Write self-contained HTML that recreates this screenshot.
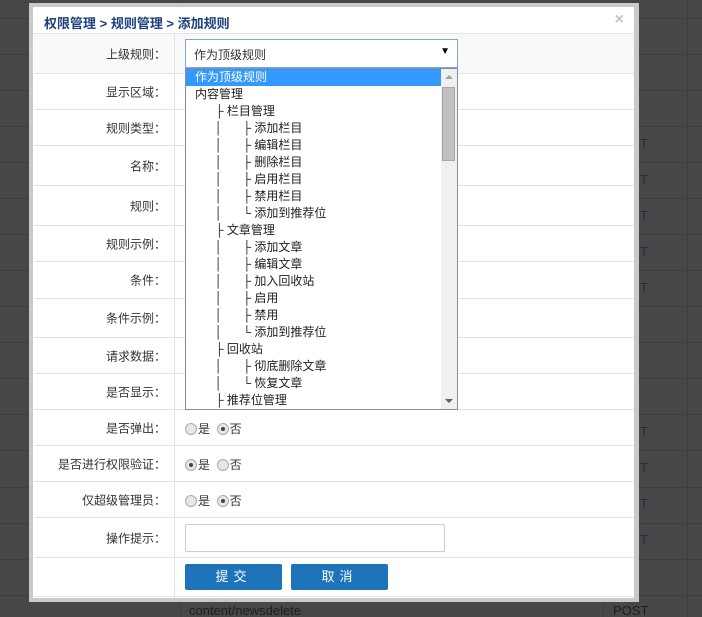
<!DOCTYPE html>
<html style="height:617px;overflow:hidden"><head><meta charset="utf-8"><style>
*{margin:0;padding:0;box-sizing:border-box}
body{width:702px;height:617px;overflow:hidden;background:#474747;font-family:"Liberation Sans","Noto Sans CJK SC",sans-serif;font-size:12px;position:relative;color:#333}
.bgh{position:absolute;left:0;width:702px;height:1px;background:#3d3d3d}
.bgv{position:absolute;top:0;width:1px;height:617px;background:#3d3d3d}
.bt{position:absolute;color:#1e1e1e;font-size:13px}
.dlg{position:absolute;left:29px;top:3px;width:610px;height:599px;background:#c9c9c9}
.in{position:absolute;left:4px;top:4px;width:601px;height:591px;background:#fff}
.title{position:absolute;left:11px;top:6px;font-size:13px;font-weight:bold;color:#1d3f7b}
.x{position:absolute;right:10px;top:4px;color:#c4c4c4;font-size:16px;font-weight:bold}
.row{position:absolute;left:1px;width:600px;border-top:1px solid #e2e2e2}
.lab{position:absolute;left:0;width:132px;text-align:right;top:50%;transform:translateY(-50%);font-size:12px;color:#333}
.vl{position:absolute;left:141px;top:27px;width:1px;height:564px;background:#e2e2e2}
.sel{position:absolute;left:152px;top:32px;width:273px;height:29px;border:1px solid #7ea6d8;background:#fff;padding:6px 0 0 8px}
.sel b{position:absolute;right:7px;top:6px;font-size:10px;color:#000}
.list{position:absolute;left:152px;top:61px;width:273px;height:342px;border:1px solid #7f8fa8;background:#fff;overflow:hidden}
.it{height:17px;line-height:17px;white-space:pre;padding-left:9px;color:#222;position:relative}
.it.h{background:#3399ff;color:#fff}
.sb{position:absolute;right:0;top:0;width:16px;height:340px;background:#f0f0f0}
.th{position:absolute;left:1px;top:18px;width:13px;height:74px;background:#c1c1c1;border:1px solid #a8a8a8}
.radio{position:absolute;left:152px;font-size:12px}
.r{display:inline-block;width:12px;height:12px;border-radius:50%;border:1px solid #aaa;background:#e6e6e6;vertical-align:-2px;position:relative;margin-right:1px}
.r.on::after{content:"";position:absolute;left:3px;top:3px;width:4px;height:4px;border-radius:50%;background:#444}
.inp{position:absolute;left:152px;top:517px;width:260px;height:28px;border:1px solid #ccc;border-radius:2px}
.btn{position:absolute;top:557px;width:97px;height:26px;background:#1e74b8;color:#fff;text-align:center;line-height:26px;font-size:13px;letter-spacing:5px;border-radius:2px}
</style></head><body>
<div class="bgh" style="top:18px"></div><div class="bgh" style="top:54px"></div><div class="bgh" style="top:90px"></div><div class="bgh" style="top:126px"></div><div class="bgh" style="top:162px"></div><div class="bgh" style="top:198px"></div><div class="bgh" style="top:234px"></div><div class="bgh" style="top:270px"></div><div class="bgh" style="top:306px"></div><div class="bgh" style="top:342px"></div><div class="bgh" style="top:378px"></div><div class="bgh" style="top:414px"></div><div class="bgh" style="top:450px"></div><div class="bgh" style="top:487px"></div><div class="bgh" style="top:523px"></div><div class="bgh" style="top:559px"></div><div class="bgh" style="top:595px"></div>
<div class="bgv" style="left:180px"></div><div class="bgv" style="left:687px"></div><div class="bgv" style="left:603px;top:595px;height:22px"></div>
<div class="bt" style="left:640px;top:136px;color:#3a1a48">T</div><div class="bt" style="left:640px;top:172px;color:#3a1a48">T</div><div class="bt" style="left:640px;top:208px;color:#3a1a48">T</div><div class="bt" style="left:640px;top:244px;color:#3a1a48">T</div><div class="bt" style="left:640px;top:280px;color:#3a1a48">T</div><div class="bt" style="left:640px;top:424px;color:#3a1a48">T</div><div class="bt" style="left:640px;top:460px;color:#3a1a48">T</div><div class="bt" style="left:640px;top:496px;color:#3a1a48">T</div><div class="bt" style="left:640px;top:532px;color:#3a1a48">T</div>
<div class="bt" style="left:189px;top:603px">content/newsdelete</div><div class="bt" style="left:613px;top:603px">POST</div>
<div class="dlg"><div class="in">
<div class="title">权限管理 &gt; 规则管理 &gt; 添加规则</div>
<div class="x">×</div>
<div class="row" style="top:26px;height:40px;background:#f9f9f9"><div class="lab">上级规则：</div></div>
<div class="row" style="top:66px;height:36px"><div class="lab">显示区域：</div></div>
<div class="row" style="top:102px;height:36px"><div class="lab">规则类型：</div></div>
<div class="row" style="top:138px;height:40px"><div class="lab">名称：</div></div>
<div class="row" style="top:178px;height:40px"><div class="lab">规则：</div></div>
<div class="row" style="top:218px;height:36px"><div class="lab">规则示例：</div></div>
<div class="row" style="top:254px;height:37px"><div class="lab">条件：</div></div>
<div class="row" style="top:291px;height:39px"><div class="lab">条件示例：</div></div>
<div class="row" style="top:330px;height:36px"><div class="lab">请求数据：</div></div>
<div class="row" style="top:366px;height:36px"><div class="lab">是否显示：</div></div>
<div class="row" style="top:402px;height:36px"><div class="lab">是否弹出：</div></div>
<div class="row" style="top:438px;height:36px"><div class="lab">是否进行权限验证：</div></div>
<div class="row" style="top:474px;height:36px"><div class="lab">仅超级管理员：</div></div>
<div class="row" style="top:510px;height:40px"><div class="lab">操作提示：</div></div>
<div class="row" style="top:550px;height:39px"></div>
<div class="row" style="top:589px;height:2px"></div>
<div class="vl"></div>
<div class="radio" style="top:413px"><span class="r"></span>是 &nbsp;<span class="r on"></span>否</div>
<div class="radio" style="top:449px"><span class="r on"></span>是 &nbsp;<span class="r"></span>否</div>
<div class="radio" style="top:485px"><span class="r"></span>是 &nbsp;<span class="r on"></span>否</div>
<div class="inp"></div>
<div class="btn" style="left:152px">提交</div>
<div class="btn" style="left:258px">取消</div>
<div class="sel">作为顶级规则<b>▼</b></div>
<div class="list">
<div class="it h">作为顶级规则</div>
<div class="it">内容管理</div>
<div class="it">      ├ 栏目管理</div>
<div class="it">      │      ├ 添加栏目</div>
<div class="it">      │      ├ 编辑栏目</div>
<div class="it">      │      ├ 删除栏目</div>
<div class="it">      │      ├ 启用栏目</div>
<div class="it">      │      ├ 禁用栏目</div>
<div class="it">      │      └ 添加到推荐位</div>
<div class="it">      ├ 文章管理</div>
<div class="it">      │      ├ 添加文章</div>
<div class="it">      │      ├ 编辑文章</div>
<div class="it">      │      ├ 加入回收站</div>
<div class="it">      │      ├ 启用</div>
<div class="it">      │      ├ 禁用</div>
<div class="it">      │      └ 添加到推荐位</div>
<div class="it">      ├ 回收站</div>
<div class="it">      │      ├ 彻底删除文章</div>
<div class="it">      │      └ 恢复文章</div>
<div class="it">      ├ 推荐位管理</div>
<div class="sb"><div style="position:absolute;left:4px;top:6px;border:4px solid transparent;border-bottom:4px solid #a0a0a0;border-top:0"></div><div class="th"></div><div style="position:absolute;left:4px;bottom:6px;border:4px solid transparent;border-top:4px solid #606060;border-bottom:0"></div></div>
</div>
</div></div>
</body></html>
